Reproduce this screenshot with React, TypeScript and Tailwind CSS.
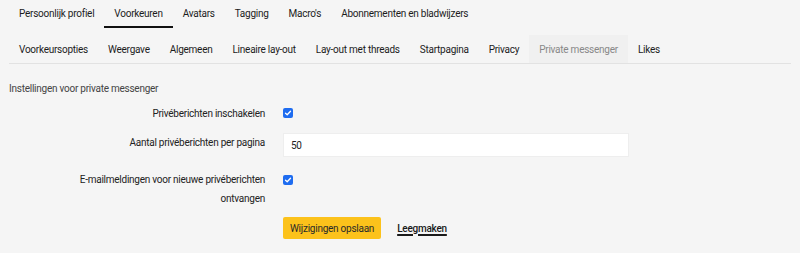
import React from 'react';

const TOP_TABS = ['Persoonlijk profiel', 'Voorkeuren', 'Avatars', 'Tagging', "Macro's", 'Abonnementen en bladwijzers'];
const SUB_TABS = [
  'Voorkeursopties',
  'Weergave',
  'Algemeen',
  'Lineaire lay-out',
  'Lay-out met threads',
  'Startpagina',
  'Privacy',
  'Private messenger',
  'Likes',
];

function Checkbox() {
  return (
    <span className="inline-flex w-[10px] h-[10px] rounded-[2px] bg-[#1e6cf0] items-center justify-center">
      <svg width="8" height="8" viewBox="0 0 8 8" fill="none">
        <path d="M1.5 4.2 L3.2 5.8 L6.5 2.2" stroke="white" strokeWidth="1.3" strokeLinecap="round" strokeLinejoin="round" />
      </svg>
    </span>
  );
}

function Row({ label, children, top = false }: { label: React.ReactNode; children: React.ReactNode; top?: boolean }) {
  return (
    <div className={`flex gap-[18px] ${top ? 'items-start' : 'items-center'}`}>
      <div className="w-[256px] shrink-0 flex justify-end">
        <div className="w-[215px] text-right text-[#222] leading-[19px]">{label}</div>
      </div>
      <div className="flex-1">{children}</div>
    </div>
  );
}

export default function App() {
  return (
    <div
      className="w-[800px] h-[253px] bg-[#f5f5f5] text-[10px] tracking-[-0.25px] text-[#1c1c1c] overflow-hidden"
      style={{ fontFamily: 'Roboto, "Liberation Sans", sans-serif' }}
    >
      <div className="flex px-[9px] h-[28px]">
        {TOP_TABS.map((t, i) => (
          <div key={t} className={`px-[10px] flex items-center border-b-2 ${i === 1 ? 'border-[#111]' : 'border-transparent'}`}>
            {t}
          </div>
        ))}
      </div>
      <div className="mx-[9px] mt-[7px] flex h-[29px] border-b border-[#e2e2e2]">
        {SUB_TABS.map((t) => (
          <div
            key={t}
            className={`px-[10px] flex items-center ${t === 'Private messenger' ? 'bg-[#f0f0f0] text-[#888]' : ''}`}
          >
            {t}
          </div>
        ))}
      </div>
      <div className="px-[9px] pt-[17px] text-[#444]">Instellingen voor private messenger</div>
      <div className="px-[9px] mt-[3px] flex flex-col">
        <Row label="Privéberichten inschakelen">
          <div className="h-[28px] flex items-center"><Checkbox /></div>
        </Row>
        <Row label="Aantal privéberichten per pagina">
          <div className="mt-[6px] w-[346px] h-[24px] bg-white border border-[#eeeeee] px-[7px] flex items-center text-[#222]">50</div>
        </Row>
        <div className="mt-[13px]">
          <Row label={<>E-mailmeldingen voor nieuwe privéberichten ontvangen</>} top>
            <div className="h-[19px] flex items-center"><Checkbox /></div>
          </Row>
        </div>
        <div className="mt-[9px] ml-[274px] flex items-center gap-[16px]">
          <button className="h-[22px] px-[7px] rounded-[2px] bg-[#fcc21b] text-[#2a2a2a]">Wijzigingen opslaan</button>
          <span className="underline underline-offset-2 decoration-[1.5px] font-medium text-[#1a1a1a]">Leegmaken</span>
        </div>
      </div>
    </div>
  );
}
